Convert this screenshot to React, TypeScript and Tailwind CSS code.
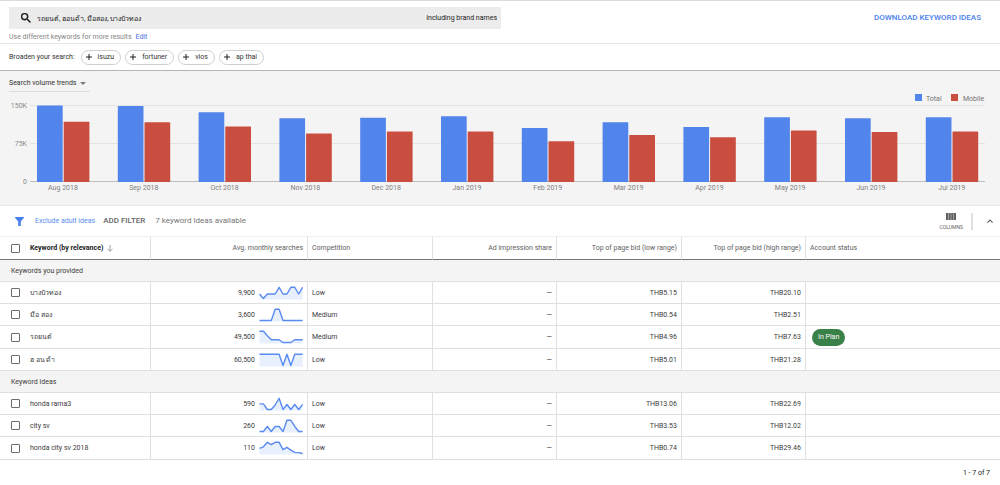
import { useState } from "react";

const months = [
  { label: "Aug 2018", total: 149, mobile: 117 },
  { label: "Sep 2018", total: 148, mobile: 116 },
  { label: "Oct 2018", total: 136, mobile: 108 },
  { label: "Nov 2018", total: 124, mobile: 94 },
  { label: "Dec 2018", total: 125, mobile: 98 },
  { label: "Jan 2019", total: 128, mobile: 98 },
  { label: "Feb 2019", total: 105, mobile: 79 },
  { label: "Mar 2019", total: 116, mobile: 91 },
  { label: "Apr 2019", total: 107, mobile: 87 },
  { label: "May 2019", total: 126, mobile: 100 },
  { label: "Jun 2019", total: 124, mobile: 97 },
  { label: "Jul 2019", total: 126, mobile: 98 },
];

type Row = {
  keyword: string;
  searches: string;
  trend: number[];
  competition: string;
  low: string;
  high: string;
  inPlan?: boolean;
};

const groups: { title: string; rows: Row[] }[] = [
  {
    title: "Keywords you provided",
    rows: [
      { keyword: "บางบัวทอง", searches: "9,900", trend: [0.4, 0, 0.4, 0.4, 0.4, 1, 0.4, 0.4, 1, 1, 0.4, 1], competition: "Low", low: "THB5.15", high: "THB20.10" },
      { keyword: "มือ สอง", searches: "3,600", trend: [0, 0, 0, 0, 1, 1, 0, 0, 0, 0, 0, 0], competition: "Medium", low: "THB0.54", high: "THB2.51" },
      { keyword: "รถยนต์", searches: "49,500", trend: [1, 1, 0.6, 0.25, 0.25, 0.25, 0, 0, 0, 0.25, 0.25, 0.25], competition: "Medium", low: "THB4.96", high: "THB7.63", inPlan: true },
      { keyword: "ฮ อน ด้า", searches: "60,500", trend: [1, 1, 1, 1, 1, 1, 0, 1, 0, 1, 1, 1], competition: "Low", low: "THB5.01", high: "THB21.28" },
    ],
  },
  {
    title: "Keyword ideas",
    rows: [
      { keyword: "honda rama3", searches: "590", trend: [0.5, 0.5, 0, 0, 0.4, 1, 0, 0.45, 0, 0.45, 0, 0.45], competition: "Low", low: "THB13.06", high: "THB22.69" },
      { keyword: "city sv", searches: "260", trend: [0, 0, 0.45, 0, 0.45, 0.45, 0, 1, 1, 0.45, 0, 0], competition: "Low", low: "THB3.53", high: "THB12.02" },
      { keyword: "honda city sv 2018", searches: "110", trend: [0.45, 0.6, 1, 0.8, 1, 1, 0.35, 0.55, 0.3, 0.1, 0.08, 0], competition: "Low", low: "THB0.74", high: "THB29.46" },
    ],
  },
];

const suggestions = ["isuzu", "fortuner", "vios", "ap thai"];

function Sparkline({ values }: { values: number[] }) {
  const points = values.map((v, i) => `${0.5 + i * 3.92},${12.5 - v * 11.2}`).join(" ");
  return (
    <svg viewBox="0 0 44 14" className="h-3.5 w-11 shrink-0" aria-hidden="true">
      <polygon points={`0.5,13.5 ${points} 43.6,13.5`} fill="#e8effd" />
      <polyline points={points} fill="none" stroke="#5a8cf0" strokeWidth="1.4" strokeLinejoin="round" />
    </svg>
  );
}

function TrendChart() {
  const base = 89.5;
  const scale = 76.5 / 150;
  return (
    <svg viewBox="0 0 1000 113" className="block w-full" role="img" aria-label="Search volume trends">
      <g fontFamily="Roboto, sans-serif" fontSize="7">
        <rect x="915" y="2" width="7" height="7" fill="#5285ec" />
        <text x="926" y="9" fill="#757575">Total</text>
        <rect x="951" y="2" width="7" height="7" fill="#c94e40" />
        <text x="963" y="9" fill="#757575">Mobile</text>
        <g stroke="#e3e3e3" strokeWidth="1">
          <path d="M30 13.5H985M30 51.5H985" />
          <path d="M30 89.5H985" stroke="#bdbdbd" />
        </g>
        <g fill="#8a8a8a" textAnchor="end">
          <text x="27" y="16">150K</text>
          <text x="27" y="54">75K</text>
          <text x="27" y="92">0</text>
        </g>
        {months.map((m, i) => {
          const x = 37 + i * 80.8;
          return (
            <g key={m.label}>
              <rect x={x} y={base - m.total * scale} width="25.7" height={m.total * scale + 0.5} rx="0.5" fill="#5285ec" />
              <rect x={x + 26.7} y={base - m.mobile * scale} width="25.7" height={m.mobile * scale + 0.5} rx="0.5" fill="#c94e40" />
              <text x={x + 26} y="98" textAnchor="middle" fill="#808080">{m.label}</text>
            </g>
          );
        })}
      </g>
    </svg>
  );
}

function Tick({ label, checked, onChange }: { label: string; checked: boolean; onChange: () => void }) {
  return (
    <input
      type="checkbox"
      aria-label={label}
      checked={checked}
      onChange={onChange}
      className="block size-[9px] appearance-none rounded-[1px] border border-[#6b6b6b] bg-white checked:bg-[#5285ec]"
    />
  );
}

export default function App() {
  const [selected, setSelected] = useState<string[]>([]);
  const toggle = (k: string) => setSelected((s) => (s.includes(k) ? s.filter((x) => x !== k) : [...s, k]));
  const all = groups.flatMap((g) => g.rows.map((r) => r.keyword));
  const allSelected = selected.length === all.length;
  const cell = "border-b border-l border-[#e0e0e0] px-1 font-normal";

  return (
    <div className="min-h-screen bg-white font-['Roboto',sans-serif] text-[7px] leading-[10px] text-[#3c3c3c]">
      <header className="border-t border-[#dcdcdc]">
        <div className="flex items-start justify-between pt-1.5 pr-[19px] pl-[9px]">
          <label className="flex h-[22px] w-[51%] max-w-[492px] items-center bg-[#ececec] pr-1 pl-3">
            <svg viewBox="3 3 18 18" className="mr-1.5 size-2.5 shrink-0" fill="#212121" stroke="#212121" strokeWidth="0.8" aria-hidden="true">
              <path d="M15.5 14h-.79l-.28-.27A6.47 6.47 0 0 0 16 9.5 6.5 6.5 0 1 0 9.5 16c1.610 0 3.090-.590 4.230-1.570l.270.280v.790l5 4.990L20.490 19l-4.990-5zm-6 0C7.010 14 5 11.990 5 9.5S7.010 5 9.5 5 14 7.010 14 9.5 11.990 14 9.5 14z" />
            </svg>
            <input
              type="text"
              aria-label="Keywords"
              defaultValue="รถยนต์, ฮอนด้า, มือสอง, บางบัวทอง"
              className="h-4 min-w-0 flex-1 bg-transparent text-[7px] text-[#212121] outline-none"
            />
            <span className="text-[#212121]">Including brand names</span>
          </label>
          <button type="button" className="mt-1.5 text-[8px] font-medium text-[#4a80ee]">DOWNLOAD KEYWORD IDEAS</button>
        </div>
        <p className="flex h-3.5 items-center gap-1 pt-0.5 pl-[9px] text-[#868686]">
          Use different keywords for more results
          <a href="#edit" className="text-[#4a6fe0]">Edit</a>
        </p>
      </header>

      <section className="flex h-[27px] items-center gap-1 border-t border-[#e6e6e6] pl-[9px]">
        <span className="mr-0.5 text-[#333333]">Broaden your search:</span>
        {suggestions.map((s) => (
          <button key={s} type="button" className="flex h-[15px] items-center gap-1.5 rounded-full border border-[#cfcfcf] pr-1.5 pl-1 text-[#333333]">
            <svg viewBox="0 0 6 6" className="size-1.5" aria-hidden="true">
              <path d="M3 0V6M0 3H6" stroke="#212121" strokeWidth="1" />
            </svg>
            {s}
          </button>
        ))}
      </section>

      <section className="border-t border-b border-t-[#b5b5b5] border-b-[#e6e6e6] bg-[#f4f4f4] pt-1">
        <button type="button" className="ml-[9px] flex h-[17px] w-[81px] items-center gap-1 border-b border-[#dddddd] text-[#333333]">
          Search volume trends
          <svg viewBox="0 0 6 3" className="h-[3px] w-1.5" fill="#7a7a7a" aria-hidden="true">
            <path d="M0 0H6L3 3Z" />
          </svg>
        </button>
        <TrendChart />
      </section>

      <section className="flex h-[30px] items-center pr-[3px] pl-[15px] text-[8px]">
        <svg viewBox="0 0 9 9" className="mr-[11px] size-[9px]" fill="#4a80ee" aria-hidden="true">
          <path d="M0 0H9V0.800L5.800 4.600V9H3.200V4.600L0 0.800Z" />
        </svg>
        <a href="#exclude" className="mr-2 text-[7px] text-[#5a8cf0]">Exclude adult ideas</a>
        <button type="button" className="mr-2.5 font-medium text-[#666666]">ADD FILTER</button>
        <span className="text-[#757575]">7 keyword ideas available</span>
        <button type="button" className="ml-auto flex flex-col items-center gap-1 text-[5px] leading-[6px] text-[#616161]">
          <svg viewBox="0 0 10 7" className="h-[7px] w-2.5" fill="#616161" aria-hidden="true">
            <path d="M0 0H2.200V7H0ZM2.600 0H4.800V7H2.600ZM5.200 0H7.400V7H5.200ZM7.800 0H10V7H7.800Z" />
          </svg>
          COLUMNS
        </button>
        <span className="mr-2.5 ml-2 h-[17px] w-0.5 bg-[#e0e0e0]" />
        <button type="button" aria-label="Collapse" className="p-1">
          <svg viewBox="0 0 6 4" className="h-1 w-1.5" fill="none" aria-hidden="true">
            <path d="M0.400 3.600L3 1L5.600 3.600" stroke="#616161" strokeWidth="1.1" />
          </svg>
        </button>
      </section>

      <table className="w-full table-fixed border-separate border-spacing-0 text-left">
        <colgroup>
          <col className="w-[3%]" />
          <col className="w-[12%]" />
          <col className="w-[15.7%]" />
          <col className="w-[12.5%]" />
          <col className="w-[12.4%]" />
          <col className="w-[12.5%]" />
          <col className="w-[12.4%]" />
          <col />
        </colgroup>
        <thead>
          <tr className="h-6 text-[#616161] [&>th]:border-t [&>th]:border-t-[#eeeeee] [&>th]:border-b-[#757575]">
            <th className="border-b pl-[11px]">
              <Tick label="Select all keywords" checked={allSelected} onChange={() => setSelected(allSelected ? [] : all)} />
            </th>
            <th className="border-b text-[#212121]">
              <button type="button" className="flex items-center gap-1 font-bold">
                Keyword (by relevance)
                <svg viewBox="0 0 6 7" className="h-[7px] w-1.5" fill="none" stroke="#8a8a8a" strokeWidth="0.8" aria-hidden="true">
                  <path d="M3 0V6.300M0.400 3.700L3 6.300L5.600 3.700" />
                </svg>
              </button>
            </th>
            <th className={`${cell} text-right`}>Avg. monthly searches</th>
            <th className={cell}>Competition</th>
            <th className={`${cell} text-right`}>Ad impression share</th>
            <th className={`${cell} text-right`}>Top of page bid (low range)</th>
            <th className={`${cell} text-right`}>Top of page bid (high range)</th>
            <th className={cell}>Account status</th>
          </tr>
        </thead>
        {groups.map((g) => (
          <tbody key={g.title}>
            <tr className="h-[22px]">
              <th colSpan={8} className="border-b border-[#e0e0e0] bg-[#f4f4f4] pl-[11px] font-normal">{g.title}</th>
            </tr>
            {g.rows.map((r, i) => (
              <tr key={r.keyword} className={i === 2 ? "h-[23px]" : "h-[22px]"}>
                <td className="border-b border-[#e0e0e0] pl-[11px]">
                  <Tick label={r.keyword} checked={selected.includes(r.keyword)} onChange={() => toggle(r.keyword)} />
                </td>
                <td className="border-b border-[#e0e0e0]">{r.keyword}</td>
                <td className={cell}>
                  <div className="flex items-center justify-end gap-1">
                    {r.searches}
                    <Sparkline values={r.trend} />
                  </div>
                </td>
                <td className={cell}>{r.competition}</td>
                <td className={`${cell} text-right`}>—</td>
                <td className={`${cell} text-right`}>{r.low}</td>
                <td className={`${cell} text-right`}>{r.high}</td>
                <td className={cell}>
                  {r.inPlan && (
                    <span className="ml-0.5 inline-flex h-[17px] items-center rounded-full bg-[#3a8049] px-1.5 align-middle text-white">In Plan</span>
                  )}
                </td>
              </tr>
            ))}
          </tbody>
        ))}
      </table>
      <p className="pt-2 pr-2.5 text-right text-[#212121]">1 - 7 of 7</p>
    </div>
  );
}
